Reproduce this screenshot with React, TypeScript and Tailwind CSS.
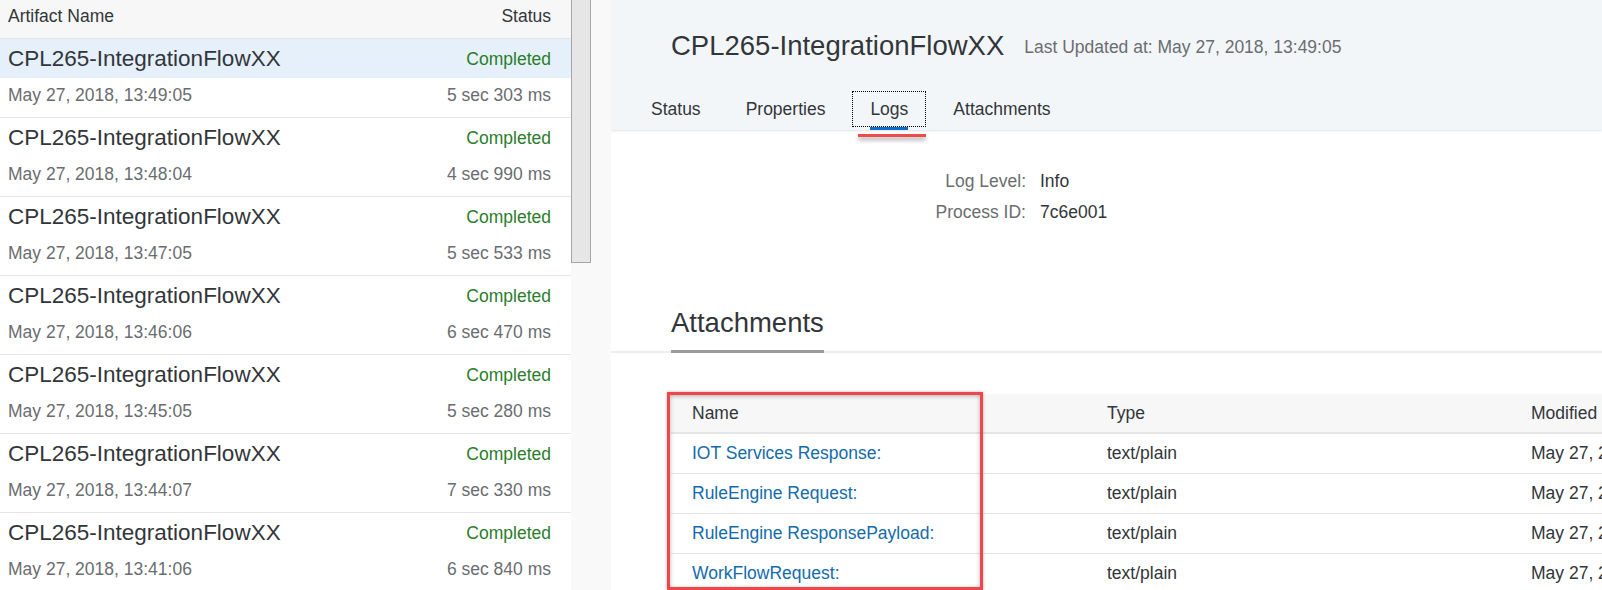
const font = "font-['Liberation_Sans',Arial,sans-serif]";

// ─── data ─────────────────────────────────────────────────────────────────────

const runs = [
  { time: "13:49:05", dur: "5 sec 303 ms" },
  { time: "13:48:04", dur: "4 sec 990 ms" },
  { time: "13:47:05", dur: "5 sec 533 ms" },
  { time: "13:46:06", dur: "6 sec 470 ms" },
  { time: "13:45:05", dur: "5 sec 280 ms" },
  { time: "13:44:07", dur: "7 sec 330 ms" },
  { time: "13:41:06", dur: "6 sec 840 ms" },
];

const attachments = [
  "IOT Services Response:",
  "RuleEngine Request:",
  "RuleEngine ResponsePayload:",
  "WorkFlowRequest:",
];

const tabs = ["Status", "Properties", "Logs", "Attachments"];

// ─── list ─────────────────────────────────────────────────────────────────────

function RunList() {
  return (
    <div className="w-[571px] shrink-0 bg-white">
      <div className="h-[39px] flex items-center justify-between pl-[8px] pr-[20px] pb-[5px] bg-[#f7f7f7] border-b border-[#e5e5e5] text-[17.5px] text-[#32363a]">
        <span>Artifact Name</span>
        <span>Status</span>
      </div>
      {runs.map((r, i) => (
        <div key={r.time} className="border-b border-[#e5e5e5]">
          <div
            className={`h-[39px] flex items-center justify-between pl-[8px] pr-[20px] pt-[1px] ${
              i === 0 ? "bg-[#e5f0fa]" : ""
            }`}
          >
            <span className="text-[22.5px] leading-[26px] text-[#32363a]">CPL265-IntegrationFlowXX</span>
            <span className="text-[17.5px] text-[#2b7d2b]">Completed</span>
          </div>
          <div className="h-[39px] flex items-start justify-between pl-[8px] pr-[20px] pt-[6px] text-[17.5px] leading-[22px] text-[#6a6d70]">
            <span>May 27, 2018, {r.time}</span>
            <span>{r.dur}</span>
          </div>
        </div>
      ))}
    </div>
  );
}

// ─── detail ───────────────────────────────────────────────────────────────────

function Detail() {
  return (
    <div className="relative flex-1 min-w-0 overflow-hidden bg-white">
      {/* Header */}
      <div className="bg-[#f3f6f9] shadow-[0_1px_2px_rgba(0,0,0,0.12)]">
        <div className="h-[91px] flex items-center pl-[60px] gap-[20px]">
          <span className="text-[27.5px] text-[#32363a]">CPL265-IntegrationFlowXX</span>
          <span className="text-[17.5px] text-[#6a6d70] pt-[4px]">Last Updated at: May 27, 2018, 13:49:05</span>
        </div>
        <div className="h-[39px] flex items-start pl-[40px] gap-[45px]">
          {tabs.map((t) =>
            t === "Logs" ? (
              <div
                key={t}
                className="relative h-[36px] -mx-[18px] px-[17px] flex items-center border border-dotted border-black text-[17.5px] text-[#32363a]"
              >
                {t}
                <span className="absolute left-[17px] right-[17px] -bottom-[4px] h-[3px] bg-[#0a6ed1]" />
              </div>
            ) : (
              <div key={t} className="h-[36px] flex items-center text-[17.5px] text-[#32363a]">
                {t}
              </div>
            )
          )}
        </div>
      </div>

      {/* annotation under Logs */}
      <div className="absolute left-[247px] top-[134px] w-[68px] h-[3px] bg-[#f04a4a] shadow-[0_3px_4px_rgba(0,0,0,0.35)]" />

      {/* Log info */}
      <div className="pt-[36px] text-[17.5px]">
        {[
          ["Log Level:", "Info"],
          ["Process ID:", "7c6e001"],
        ].map(([k, v]) => (
          <div key={k} className="h-[31px] flex items-center gap-[14px]">
            <span className="w-[415px] text-right text-[#6a6d70]">{k}</span>
            <span className="text-[#32363a]">{v}</span>
          </div>
        ))}
      </div>

      {/* Attachments section */}
      <div className="mt-[78px] border-b-2 border-[#ededed]">
        <div className="ml-[60px] inline-block pb-[10px] -mb-[2px] border-b-[3px] border-[#9b9b9b] text-[27.5px] leading-[34px] text-[#32363a]">
          Attachments
        </div>
      </div>

      <div className="relative mt-[41px] ml-[60px] w-[1000px] text-[17.5px]">
        <div className="grid grid-cols-[415px_424px_1fr] h-[40px] items-center bg-[#f7f7f7] border-b-2 border-[#e5e5e5] text-[#32363a]">
          <span className="pl-[21px]">Name</span>
          <span className="pl-[21px]">Type</span>
          <span className="pl-[21px]">Modified</span>
        </div>
        {attachments.map((a) => (
          <div key={a} className="grid grid-cols-[415px_424px_1fr] h-[40px] items-center border-b border-[#e5e5e5]">
            <span className="pl-[21px] text-[#136bad]">{a}</span>
            <span className="pl-[21px] text-[#32363a]">text/plain</span>
            <span className="pl-[21px] text-[#32363a] whitespace-nowrap">May 27, 2018, 13:49:05</span>
          </div>
        ))}
        {/* annotation box */}
        <div className="absolute -left-[4px] -top-[2px] w-[316px] h-[198px] border-[3px] border-[#f0454a] shadow-[0_0_3px_rgba(0,0,0,0.3),inset_0_1px_4px_rgba(0,0,0,0.3)]" />
      </div>
    </div>
  );
}

// ─── page ─────────────────────────────────────────────────────────────────────

export default function App() {
  return (
    <div className={`${font} flex w-[1602px] h-[590px] overflow-hidden bg-white`}>
      <RunList />
      {/* scrollbar */}
      <div className="w-[20px] shrink-0 bg-[#f9f9f9]">
        <div className="h-[263px] bg-[#e6e6e6] border border-t-0 border-[#a6a6a6]" />
      </div>
      <div className="w-[20px] shrink-0 bg-[#f9f9f9]" />
      <Detail />
    </div>
  );
}
